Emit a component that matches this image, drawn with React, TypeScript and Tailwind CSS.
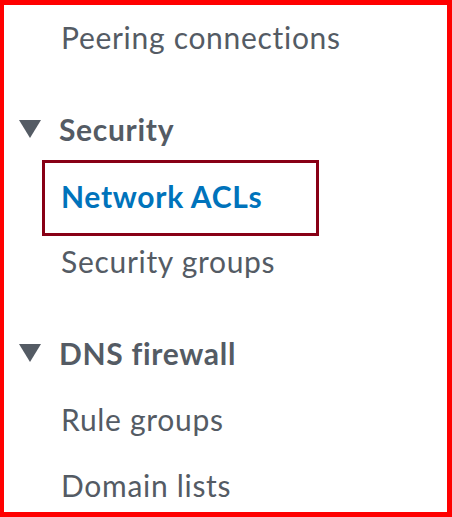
import React from "react";

const font = { fontFamily: '"Lato", "Liberation Sans", sans-serif' };

function Caret() {
  return (
    <svg width="22" height="18" viewBox="0 0 22 18" className="shrink-0">
      <polygon points="0,0 22,0 11,18" fill="#545b64" />
    </svg>
  );
}

function Item({ label }: { label: string }) {
  return (
    <div className="h-[66px] pl-[61px] leading-[66px] text-[30px] tracking-[0.7px] text-[#545b64]">
      {label}
    </div>
  );
}

function ActiveItem({ label }: { label: string }) {
  return (
    <div className="-mb-[8px] -mt-[2px] ml-[42px] flex h-[76px] w-[277px] items-center border-[3px] border-[#880015] pb-[4px] pl-[16px]">
      <span className="text-[30px] font-bold leading-[60px] tracking-[0.7px] text-[#0073bb]">{label}</span>
    </div>
  );
}

function Section({ title }: { title: string }) {
  return (
    <div className="mt-[26px] flex h-[66px] items-center gap-[18px] pl-[19px] text-[30px] font-bold tracking-[0.7px] text-[#545b64]">
      <Caret />
      <span className="leading-[66px]">{title}</span>
    </div>
  );
}

export default function App() {
  return (
    <div
      style={font}
      className="h-[517px] w-[452px] overflow-hidden border-b-[5px] border-l-4 border-r-[5px] border-t-[5px] border-[#ff0000] bg-white"
    >
      <div className="-ml-1 -mt-[1px] flex flex-col">
        <Item label="Peering connections" />
        <Section title="Security" />
        <ActiveItem label="Network ACLs" />
        <Item label="Security groups" />
        <Section title="DNS firewall" />
        <Item label="Rule groups" />
        <Item label="Domain lists" />
      </div>
    </div>
  );
}
